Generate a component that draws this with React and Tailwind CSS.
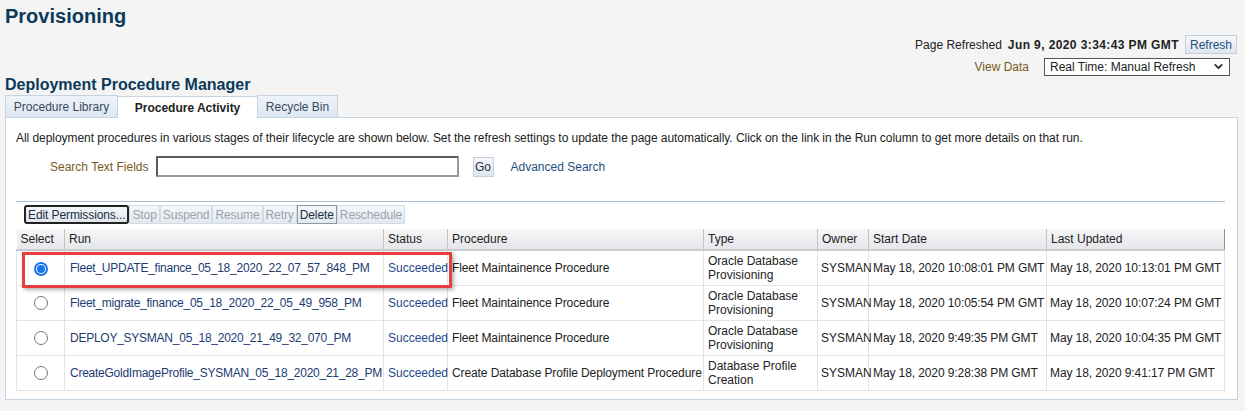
import { ChevronDown } from 'lucide-react';

const rows = [
    {
        run: 'Fleet_UPDATE_finance_05_18_2020_22_07_57_848_PM',
        procedure: 'Fleet Maintainence Procedure',
        type: ['Oracle Database', 'Provisioning'],
        start: 'May 18, 2020 10:08:01 PM GMT',
        updated: 'May 18, 2020 10:13:01 PM GMT',
        selected: true,
    },
    {
        run: 'Fleet_migrate_finance_05_18_2020_22_05_49_958_PM',
        procedure: 'Fleet Maintainence Procedure',
        type: ['Oracle Database', 'Provisioning'],
        start: 'May 18, 2020 10:05:54 PM GMT',
        updated: 'May 18, 2020 10:07:24 PM GMT',
    },
    {
        run: 'DEPLOY_SYSMAN_05_18_2020_21_49_32_070_PM',
        procedure: 'Fleet Maintainence Procedure',
        type: ['Oracle Database', 'Provisioning'],
        start: 'May 18, 2020 9:49:35 PM GMT',
        updated: 'May 18, 2020 10:04:35 PM GMT',
    },
    {
        run: 'CreateGoldImageProfile_SYSMAN_05_18_2020_21_28_PM',
        procedure: 'Create Database Profile Deployment Procedure',
        type: ['Database Profile', 'Creation'],
        start: 'May 18, 2020 9:28:38 PM GMT',
        updated: 'May 18, 2020 9:41:17 PM GMT',
    },
];

const actions = [
    { label: 'Stop', enabled: false },
    { label: 'Suspend', enabled: false },
    { label: 'Resume', enabled: false },
    { label: 'Retry', enabled: false },
    { label: 'Delete', enabled: true },
    { label: 'Reschedule', enabled: false },
];

function Radio({ checked }) {
    if (checked) {
        return (
            <span className="inline-flex w-[14px] h-[14px] rounded-full border-2 border-[#1a73e8] items-center justify-center bg-white">
                <span className="w-[8px] h-[8px] rounded-full bg-[#1a73e8]"></span>
            </span>
        );
    }
    return <span className="inline-block w-[14px] h-[14px] rounded-full border border-[#767676] bg-white"></span>;
}

export default function App() {
    return (
        <div className="w-[1245px] h-[411px] overflow-hidden bg-[#f4f4f4] text-[12px] text-[#222] font-['Liberation_Sans',Arial,sans-serif] relative">
            <div className="px-[5px] pt-[3px]">
                <h1 className="text-[20px] font-bold text-[#0b3a5a] leading-[26px]">Provisioning</h1>

                <div className="flex flex-col items-end mt-[6px] gap-[3px]">
                    <div className="flex items-center h-[19px] pr-[3px]">
                        <span className="mr-[6px]">Page Refreshed</span>
                        <span className="font-bold mr-[6px] tracking-[0.4px]">Jun 9, 2020 3:34:43 PM GMT</span>
                        <button className="h-[19px] px-[4px] border border-[#c6cfd9] bg-gradient-to-b from-[#f4f7fa] to-[#dfe6ee] text-[#1f4f80] leading-none">Refresh</button>
                    </div>
                    <div className="flex items-center h-[19px] pr-[10px]">
                        <span className="text-[#7a5b1c] mr-[15px]">View Data</span>
                        <div className="w-[186px] h-[18px] border border-[#555] bg-white flex items-center justify-between pl-[5px] pr-[4px]">
                            <span>Real Time: Manual Refresh</span>
                            <ChevronDown size={13} strokeWidth={3} />
                        </div>
                    </div>
                </div>

                <h2 className="text-[16px] font-bold text-[#0b3a5a] leading-[20px] mt-[-1px]">Deployment Procedure Manager</h2>

                <div className="flex items-end h-[22px]">
                    <div className="h-[22px] w-[113px] border border-[#c5d3e3] border-b-0 bg-gradient-to-b from-[#eef3f9] to-[#dde7f2] text-[#3a4a5a] flex items-center justify-center">Procedure Library</div>
                    <div className="h-[22px] w-[139px] bg-white border-t border-[#c5d3e3] font-bold flex items-center justify-center relative top-[1px]">Procedure Activity</div>
                    <div className="h-[22px] w-[81px] border border-[#c5d3e3] border-b-0 bg-gradient-to-b from-[#eef3f9] to-[#dde7f2] text-[#3a4a5a] flex items-center justify-center">Recycle Bin</div>
                </div>

                <div className="w-[1233px] h-[283px] bg-white border border-[#c5d3e3] pt-[12px] pl-[10px] pr-[12px]">
                    <p className="leading-[16px] tracking-[-0.05px]">All deployment procedures in various stages of their lifecycle are shown below. Set the refresh settings to update the page automatically. Click on the link in the Run column to get more details on that run.</p>

                    <div className="flex items-center mt-[10px] h-[21px]">
                        <span className="text-[#7a5b1c] ml-[34px] mr-[7px]">Search Text Fields</span>
                        <div className="w-[303px] h-[21px] border-2 border-[#5d5d5d] border-r-[#9a9a9a] border-b-[#9a9a9a] bg-white"></div>
                        <button className="ml-[14px] h-[20px] w-[21px] border border-[#c6cfd9] bg-gradient-to-b from-[#f4f7fa] to-[#dfe6ee] text-[#1f2f40] leading-none">Go</button>
                        <span className="ml-[17px] text-[#1f4f80]">Advanced Search</span>
                    </div>

                    <div className="mt-[24px] border-t border-[#a9bcd3]"></div>

                    <div className="flex items-center mt-[3px] ml-[8px] h-[19px] tracking-[-0.1px]">
                        <button className="h-[19px] px-[2px] border-2 border-[#222] rounded-[3px] bg-gradient-to-b from-[#f4f7fa] to-[#dfe6ee] text-[#1f2f40] leading-none">Edit Permissions...</button>
                        {actions.map((a) => (
                            <button
                                key={a.label}
                                className={`h-[19px] px-[2px] border leading-none bg-gradient-to-b from-[#f4f7fa] to-[#e3e9ef] ${a.enabled ? 'border-[#8a9aac] text-[#1f2f40]' : 'border-[#d3dbe3] text-[#9aa3ad]'}`}
                            >
                                {a.label}
                            </button>
                        ))}
                    </div>

                    <div className="relative mt-[5px]">
                        <table className="table-fixed border-collapse w-[1208px]">
                            <colgroup>
                                <col className="w-[48px]" />
                                <col className="w-[319px]" />
                                <col className="w-[64px]" />
                                <col className="w-[256px]" />
                                <col className="w-[114px]" />
                                <col className="w-[51px]" />
                                <col className="w-[178px]" />
                                <col className="w-[178px]" />
                            </colgroup>
                            <thead>
                                <tr className="h-[21px] bg-gradient-to-b from-[#f6f6f7] to-[#e5e6ea]">
                                    {['Select', 'Run', 'Status', 'Procedure', 'Type', 'Owner', 'Start Date', 'Last Updated'].map((h, i) => (
                                        <th
                                            key={h}
                                            className={`font-normal text-left px-[4px] border-r border-b-2 border-[#c2c4c8] border-b-[#c9ccd2] leading-none ${i === 7 ? 'border-r-[#8d8f93]' : ''}`}
                                        >
                                            {h}
                                        </th>
                                    ))}
                                </tr>
                            </thead>
                            <tbody>
                                {rows.map((r) => (
                                    <tr key={r.run} className="h-[35px]">
                                        <td className="border border-[#e3e3e3] text-center">
                                            <span className="inline-flex items-center justify-center align-middle"><Radio checked={r.selected} /></span>
                                        </td>
                                        <td className="border border-[#e3e3e3] px-[5px] text-[#1c3b73] whitespace-nowrap tracking-[-0.25px]">{r.run}</td>
                                        <td className="border border-[#e3e3e3] px-[4px] text-[#24488a] whitespace-nowrap">Succeeded</td>
                                        <td className="border border-[#e3e3e3] px-[4px] whitespace-nowrap tracking-[-0.1px]">{r.procedure}</td>
                                        <td className="border border-[#e3e3e3] px-[4px] leading-[14px]">
                                            {r.type[0]}
                                            <br />
                                            {r.type[1]}
                                        </td>
                                        <td className="border border-[#e3e3e3] px-[3px]">SYSMAN</td>
                                        <td className="border border-[#e3e3e3] px-[4px] whitespace-nowrap tracking-[-0.1px]">{r.start}</td>
                                        <td className="border border-[#e3e3e3] px-[3px] whitespace-nowrap tracking-[-0.1px]">{r.updated}</td>
                                    </tr>
                                ))}
                            </tbody>
                        </table>
                        <div className="absolute left-[6px] top-[23px] w-[430px] h-[36px] border-[3px] border-[#e5403f] shadow-[2px_2px_4px_rgba(0,0,0,0.3)] pointer-events-none"></div>
                    </div>
                </div>
            </div>
        </div>
    );
}
